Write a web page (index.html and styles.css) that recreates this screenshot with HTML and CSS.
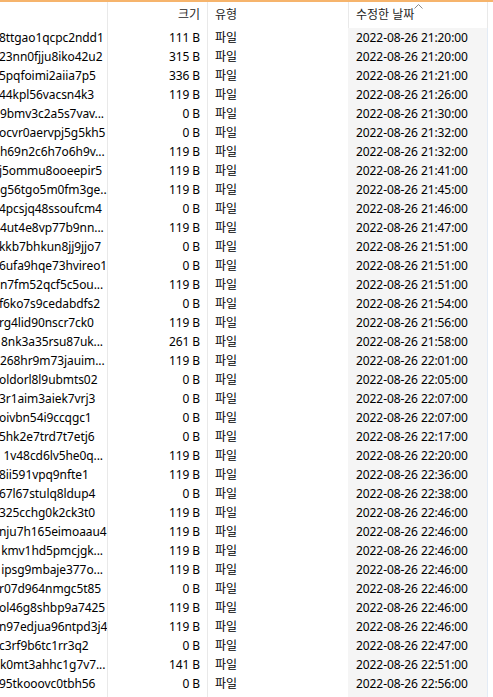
FILE: index.html
```html
<!DOCTYPE html>
<html lang="ko">
<head>
<meta charset="utf-8">
<title>파일 목록</title>
<link rel="stylesheet" href="styles.css">
</head>
<body>
<div class="view">
  <div class="topbar"></div>
  <div class="row head">
    <div class="c name"></div>
    <div class="c size">크기</div>
    <div class="c type">유형</div>
    <div class="c date">수정한 날짜<svg class="sort" width="9" height="5" viewBox="0 0 9 5"><polyline points="0.5,4.5 4.5,0.5 8.5,4.5" fill="none" stroke="#8a8a8a" stroke-width="1"/></svg></div>
    <div class="c tail"></div>
  </div>
  <div class="rows">
    <div class="row"><div class="c name">8ttgao1qcpc2ndd1</div><div class="c size">111 B</div><div class="c type">파일</div><div class="c date">2022-08-26 21:20:00</div><div class="c tail"></div></div>
    <div class="row"><div class="c name">23nn0fjju8iko42u2</div><div class="c size">315 B</div><div class="c type">파일</div><div class="c date">2022-08-26 21:20:00</div><div class="c tail"></div></div>
    <div class="row"><div class="c name">5pqfoimi2aiia7p5</div><div class="c size">336 B</div><div class="c type">파일</div><div class="c date">2022-08-26 21:21:00</div><div class="c tail"></div></div>
    <div class="row"><div class="c name">44kpl56vacsn4k3</div><div class="c size">119 B</div><div class="c type">파일</div><div class="c date">2022-08-26 21:26:00</div><div class="c tail"></div></div>
    <div class="row"><div class="c name trunc">9bmv3c2a5s7vav...</div><div class="c size">0 B</div><div class="c type">파일</div><div class="c date">2022-08-26 21:30:00</div><div class="c tail"></div></div>
    <div class="row"><div class="c name">ocvr0aervpj5g5kh5</div><div class="c size">0 B</div><div class="c type">파일</div><div class="c date">2022-08-26 21:32:00</div><div class="c tail"></div></div>
    <div class="row"><div class="c name trunc">h69n2c6h7o6h9v...</div><div class="c size">119 B</div><div class="c type">파일</div><div class="c date">2022-08-26 21:32:00</div><div class="c tail"></div></div>
    <div class="row"><div class="c name">j5ommu8ooeepir5</div><div class="c size">119 B</div><div class="c type">파일</div><div class="c date">2022-08-26 21:41:00</div><div class="c tail"></div></div>
    <div class="row"><div class="c name trunc">g56tgo5m0fm3ge...</div><div class="c size">119 B</div><div class="c type">파일</div><div class="c date">2022-08-26 21:45:00</div><div class="c tail"></div></div>
    <div class="row"><div class="c name">4pcsjq48ssoufcm4</div><div class="c size">0 B</div><div class="c type">파일</div><div class="c date">2022-08-26 21:46:00</div><div class="c tail"></div></div>
    <div class="row"><div class="c name trunc">4ut4e8vp77b9nn...</div><div class="c size">119 B</div><div class="c type">파일</div><div class="c date">2022-08-26 21:47:00</div><div class="c tail"></div></div>
    <div class="row"><div class="c name">kkb7bhkun8jj9jjo7</div><div class="c size">0 B</div><div class="c type">파일</div><div class="c date">2022-08-26 21:51:00</div><div class="c tail"></div></div>
    <div class="row"><div class="c name">6ufa9hqe73hvireo1</div><div class="c size">0 B</div><div class="c type">파일</div><div class="c date">2022-08-26 21:51:00</div><div class="c tail"></div></div>
    <div class="row"><div class="c name trunc">n7fm52qcf5c5ou...</div><div class="c size">119 B</div><div class="c type">파일</div><div class="c date">2022-08-26 21:51:00</div><div class="c tail"></div></div>
    <div class="row"><div class="c name">f6ko7s9cedabdfs2</div><div class="c size">0 B</div><div class="c type">파일</div><div class="c date">2022-08-26 21:54:00</div><div class="c tail"></div></div>
    <div class="row"><div class="c name">rg4lid90nscr7ck0</div><div class="c size">119 B</div><div class="c type">파일</div><div class="c date">2022-08-26 21:56:00</div><div class="c tail"></div></div>
    <div class="row"><div class="c name trunc">8nk3a35rsu87uk...</div><div class="c size">261 B</div><div class="c type">파일</div><div class="c date">2022-08-26 21:58:00</div><div class="c tail"></div></div>
    <div class="row"><div class="c name trunc">268hr9m73jauim...</div><div class="c size">119 B</div><div class="c type">파일</div><div class="c date">2022-08-26 22:01:00</div><div class="c tail"></div></div>
    <div class="row"><div class="c name">oldorl8l9ubmts02</div><div class="c size">0 B</div><div class="c type">파일</div><div class="c date">2022-08-26 22:05:00</div><div class="c tail"></div></div>
    <div class="row"><div class="c name">3r1aim3aiek7vrj3</div><div class="c size">0 B</div><div class="c type">파일</div><div class="c date">2022-08-26 22:07:00</div><div class="c tail"></div></div>
    <div class="row"><div class="c name">oivbn54i9ccqgc1</div><div class="c size">0 B</div><div class="c type">파일</div><div class="c date">2022-08-26 22:07:00</div><div class="c tail"></div></div>
    <div class="row"><div class="c name">5hk2e7trd7t7etj6</div><div class="c size">0 B</div><div class="c type">파일</div><div class="c date">2022-08-26 22:17:00</div><div class="c tail"></div></div>
    <div class="row"><div class="c name trunc">1v48cd6lv5he0q...</div><div class="c size">119 B</div><div class="c type">파일</div><div class="c date">2022-08-26 22:20:00</div><div class="c tail"></div></div>
    <div class="row"><div class="c name">8ii591vpq9nfte1</div><div class="c size">119 B</div><div class="c type">파일</div><div class="c date">2022-08-26 22:36:00</div><div class="c tail"></div></div>
    <div class="row"><div class="c name">67l67stulq8ldup4</div><div class="c size">0 B</div><div class="c type">파일</div><div class="c date">2022-08-26 22:38:00</div><div class="c tail"></div></div>
    <div class="row"><div class="c name">325cchg0k2ck3t0</div><div class="c size">119 B</div><div class="c type">파일</div><div class="c date">2022-08-26 22:46:00</div><div class="c tail"></div></div>
    <div class="row"><div class="c name">nju7h165eimoaau4</div><div class="c size">119 B</div><div class="c type">파일</div><div class="c date">2022-08-26 22:46:00</div><div class="c tail"></div></div>
    <div class="row"><div class="c name trunc">kmv1hd5pmcjgk...</div><div class="c size">119 B</div><div class="c type">파일</div><div class="c date">2022-08-26 22:46:00</div><div class="c tail"></div></div>
    <div class="row"><div class="c name trunc">ipsg9mbaje377o...</div><div class="c size">119 B</div><div class="c type">파일</div><div class="c date">2022-08-26 22:46:00</div><div class="c tail"></div></div>
    <div class="row"><div class="c name">r07d964nmgc5t85</div><div class="c size">0 B</div><div class="c type">파일</div><div class="c date">2022-08-26 22:46:00</div><div class="c tail"></div></div>
    <div class="row"><div class="c name">ol46g8shbp9a7425</div><div class="c size">119 B</div><div class="c type">파일</div><div class="c date">2022-08-26 22:46:00</div><div class="c tail"></div></div>
    <div class="row"><div class="c name">n97edjua96ntpd3j4</div><div class="c size">119 B</div><div class="c type">파일</div><div class="c date">2022-08-26 22:46:00</div><div class="c tail"></div></div>
    <div class="row"><div class="c name">c3rf9b6tc1rr3q2</div><div class="c size">0 B</div><div class="c type">파일</div><div class="c date">2022-08-26 22:47:00</div><div class="c tail"></div></div>
    <div class="row"><div class="c name trunc">k0mt3ahhc1g7v7...</div><div class="c size">141 B</div><div class="c type">파일</div><div class="c date">2022-08-26 22:51:00</div><div class="c tail"></div></div>
    <div class="row"><div class="c name">95tkooovc0tbh56</div><div class="c size">0 B</div><div class="c type">파일</div><div class="c date">2022-08-26 22:56:00</div><div class="c tail"></div></div>
    <div class="row filler"><div class="c name"></div><div class="c size"></div><div class="c type"></div><div class="c date"></div><div class="c tail"></div></div>
  </div>
</div>
</body>
</html>
```
FILE: styles.css
```css
* { box-sizing: border-box; }
html, body {
  margin: 0;
  padding: 0;
  background: #fff;
  height: 100%;
  overflow: hidden;
}
body {
  font-family: "Noto Sans", "Noto Sans CJK KR", sans-serif;
  font-size: 12px;
  color: #000;
}
.view {
  display: flex;
  flex-direction: column;
  height: 100vh;
}
.topbar {
  height: 2px;
  background: #f6b46c;
  flex: none;
}
.rows {
  flex: 1;
  display: flex;
  flex-direction: column;
  letter-spacing: -0.08px;
}
.row {
  display: grid;
  grid-template-columns: 108px 100px 140px 140px 1fr;
  height: 19px;
  line-height: 19px;
  flex: none;
}
.row.head {
  height: 26px;
  line-height: 26px;
  color: #1e1e1e;
}
.row.filler {
  flex: 1;
  height: auto;
}
.c {
  white-space: nowrap;
  overflow: hidden;
}
.name {
  border-right: 1px solid #e9e9e9;
  padding-left: 0;
  text-indent: -1px;
}
.name.trunc {
  text-align: right;
  padding-right: 4px;
  text-indent: 0;
}
.size {
  text-align: right;
  padding-right: 7px;
  border-right: 1px solid #e9e9e9;
}
.type {
  padding-left: 7px;
}
.date {
  padding-left: 8px;
  background: #f5f5f5;
  border-right: 1px solid #e3ebf5;
}
.head .date {
  background: #fff;
  border-left: 1px solid #e9e9e9;
  border-right: 1px solid #e9e9e9;
  padding-left: 7px;
  position: relative;
  overflow: visible;
}
.sort {
  position: absolute;
  left: 65px;
  top: 2px;
}
```
